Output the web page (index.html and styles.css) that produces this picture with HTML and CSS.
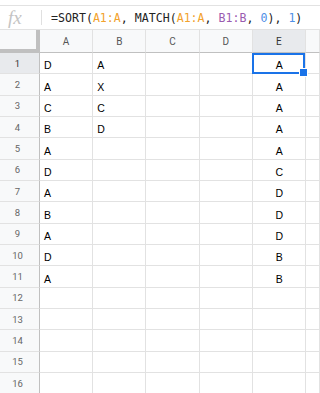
FILE: index.html
```html
<!DOCTYPE html>
<html lang="en">
  <head>
    <meta charset="UTF-8" />
    <meta name="viewport" content="width=device-width, initial-scale=1.0" />
    <title>Sheet</title>
    <link rel="stylesheet" href="styles.css">
  </head>
  <body>
    <div class="formula-bar">
      <span class="fx">fx</span>
      <span class="divider"></span>
      <div class="formula">=SORT(<span class="r1">A1:A</span>, MATCH(<span class="r1">A1:A</span>, <span class="r2">B1:B</span>, <span class="num">0</span>), <span class="num">1</span>)</div>
    </div>
    <div class="sheet">
      <div class="row head">
        <div class="corner"></div>
        <div class="ch">A</div><div class="ch">B</div><div class="ch">C</div><div class="ch">D</div><div class="ch active">E</div><div class="ch"></div>
      </div>
      <div class="row">
        <div class="rh active">1</div>
        <div class="c">D</div><div class="c">A</div><div class="c"></div><div class="c"></div><div class="c ctr sel">A</div><div class="c"></div>
      </div>
      <div class="row">
        <div class="rh">2</div>
        <div class="c">A</div><div class="c">X</div><div class="c"></div><div class="c"></div><div class="c ctr">A</div><div class="c"></div>
      </div>
      <div class="row">
        <div class="rh">3</div>
        <div class="c">C</div><div class="c">C</div><div class="c"></div><div class="c"></div><div class="c ctr">A</div><div class="c"></div>
      </div>
      <div class="row">
        <div class="rh">4</div>
        <div class="c">B</div><div class="c">D</div><div class="c"></div><div class="c"></div><div class="c ctr">A</div><div class="c"></div>
      </div>
      <div class="row">
        <div class="rh">5</div>
        <div class="c">A</div><div class="c"></div><div class="c"></div><div class="c"></div><div class="c ctr">A</div><div class="c"></div>
      </div>
      <div class="row">
        <div class="rh">6</div>
        <div class="c">D</div><div class="c"></div><div class="c"></div><div class="c"></div><div class="c ctr">C</div><div class="c"></div>
      </div>
      <div class="row">
        <div class="rh">7</div>
        <div class="c">A</div><div class="c"></div><div class="c"></div><div class="c"></div><div class="c ctr">D</div><div class="c"></div>
      </div>
      <div class="row">
        <div class="rh">8</div>
        <div class="c">B</div><div class="c"></div><div class="c"></div><div class="c"></div><div class="c ctr">D</div><div class="c"></div>
      </div>
      <div class="row">
        <div class="rh">9</div>
        <div class="c">A</div><div class="c"></div><div class="c"></div><div class="c"></div><div class="c ctr">D</div><div class="c"></div>
      </div>
      <div class="row">
        <div class="rh">10</div>
        <div class="c">D</div><div class="c"></div><div class="c"></div><div class="c"></div><div class="c ctr">B</div><div class="c"></div>
      </div>
      <div class="row">
        <div class="rh">11</div>
        <div class="c">A</div><div class="c"></div><div class="c"></div><div class="c"></div><div class="c ctr">B</div><div class="c"></div>
      </div>
      <div class="row">
        <div class="rh">12</div>
        <div class="c"></div><div class="c"></div><div class="c"></div><div class="c"></div><div class="c"></div><div class="c"></div>
      </div>
      <div class="row">
        <div class="rh">13</div>
        <div class="c"></div><div class="c"></div><div class="c"></div><div class="c"></div><div class="c"></div><div class="c"></div>
      </div>
      <div class="row">
        <div class="rh">14</div>
        <div class="c"></div><div class="c"></div><div class="c"></div><div class="c"></div><div class="c"></div><div class="c"></div>
      </div>
      <div class="row">
        <div class="rh">15</div>
        <div class="c"></div><div class="c"></div><div class="c"></div><div class="c"></div><div class="c"></div><div class="c"></div>
      </div>
      <div class="row">
        <div class="rh">16</div>
        <div class="c"></div><div class="c"></div><div class="c"></div><div class="c"></div><div class="c"></div><div class="c"></div>
      </div>
    </div>
  </body>
</html>
```

FILE: styles.css
```css
* { box-sizing: border-box; }
html, body { margin: 0; background: #fff; overflow: hidden; }
body { width: 320px; height: 393px; font-family: "Liberation Sans", Arial, sans-serif; }

.formula-bar { display: flex; align-items: center; height: 25px; margin-top: 5px; border-top: 1px solid #e2e2e2; border-bottom: 1px solid #e2e2e2; }
.fx { width: 41px; padding-left: 8px; font-family: "Liberation Serif", serif; font-style: italic; font-size: 19px; line-height: 1; color: #c4c4c4; }
.divider { width: 1px; height: 15px; background: #e0e0e0; }
.formula { padding-left: 9px; font-family: "DejaVu Sans Mono", monospace; font-size: 11.6px; color: #222; white-space: nowrap; }
.r1 { color: #f2a22c; }
.r2 { color: #9a5bb0; }
.num { color: #4f8fe6; }

.row { display: grid; grid-template-columns: 40px repeat(5, 53.2px) 1fr; height: 21.33px; }
.row.head { height: 23px; }

.corner { background: #f8f9fa; border-right: 4px solid #c0c0c0; border-bottom: 4px solid #c0c0c0; }
.ch { display: flex; align-items: center; justify-content: center; background: #f8f9fa; border-right: 1px solid #e2e2e2; border-bottom: 1px solid #c0c0c0; font-family: Roboto, sans-serif; font-size: 10px; color: #555; }
.ch.active { background: #e8eaed; color: #333; }

.rh { display: flex; align-items: center; justify-content: center; padding-right: 4px; background: #f8f9fa; border-right: 1px solid #c0c0c0; border-bottom: 1px solid #e2e2e2; font-family: Roboto, sans-serif; font-size: 9.5px; color: #666; }
.rh.active { background: #e8eaed; color: #333; }

.c { display: flex; align-items: flex-end; padding: 0 3px 2px 4px; border-right: 1px solid #e2e2e2; border-bottom: 1px solid #e2e2e2; font-size: 10.5px; line-height: 12px; color: #000; }
.c.ctr { justify-content: center; }
.c.sel { position: relative; }
.c.sel::before { content: ""; position: absolute; top: 0; left: -1px; right: 0; bottom: -1px; border: 2px solid #1a73e8; }
.c.sel::after { content: ""; position: absolute; right: -3px; bottom: -4px; width: 7px; height: 7px; background: #1a73e8; border: 1px solid #fff; }
```
